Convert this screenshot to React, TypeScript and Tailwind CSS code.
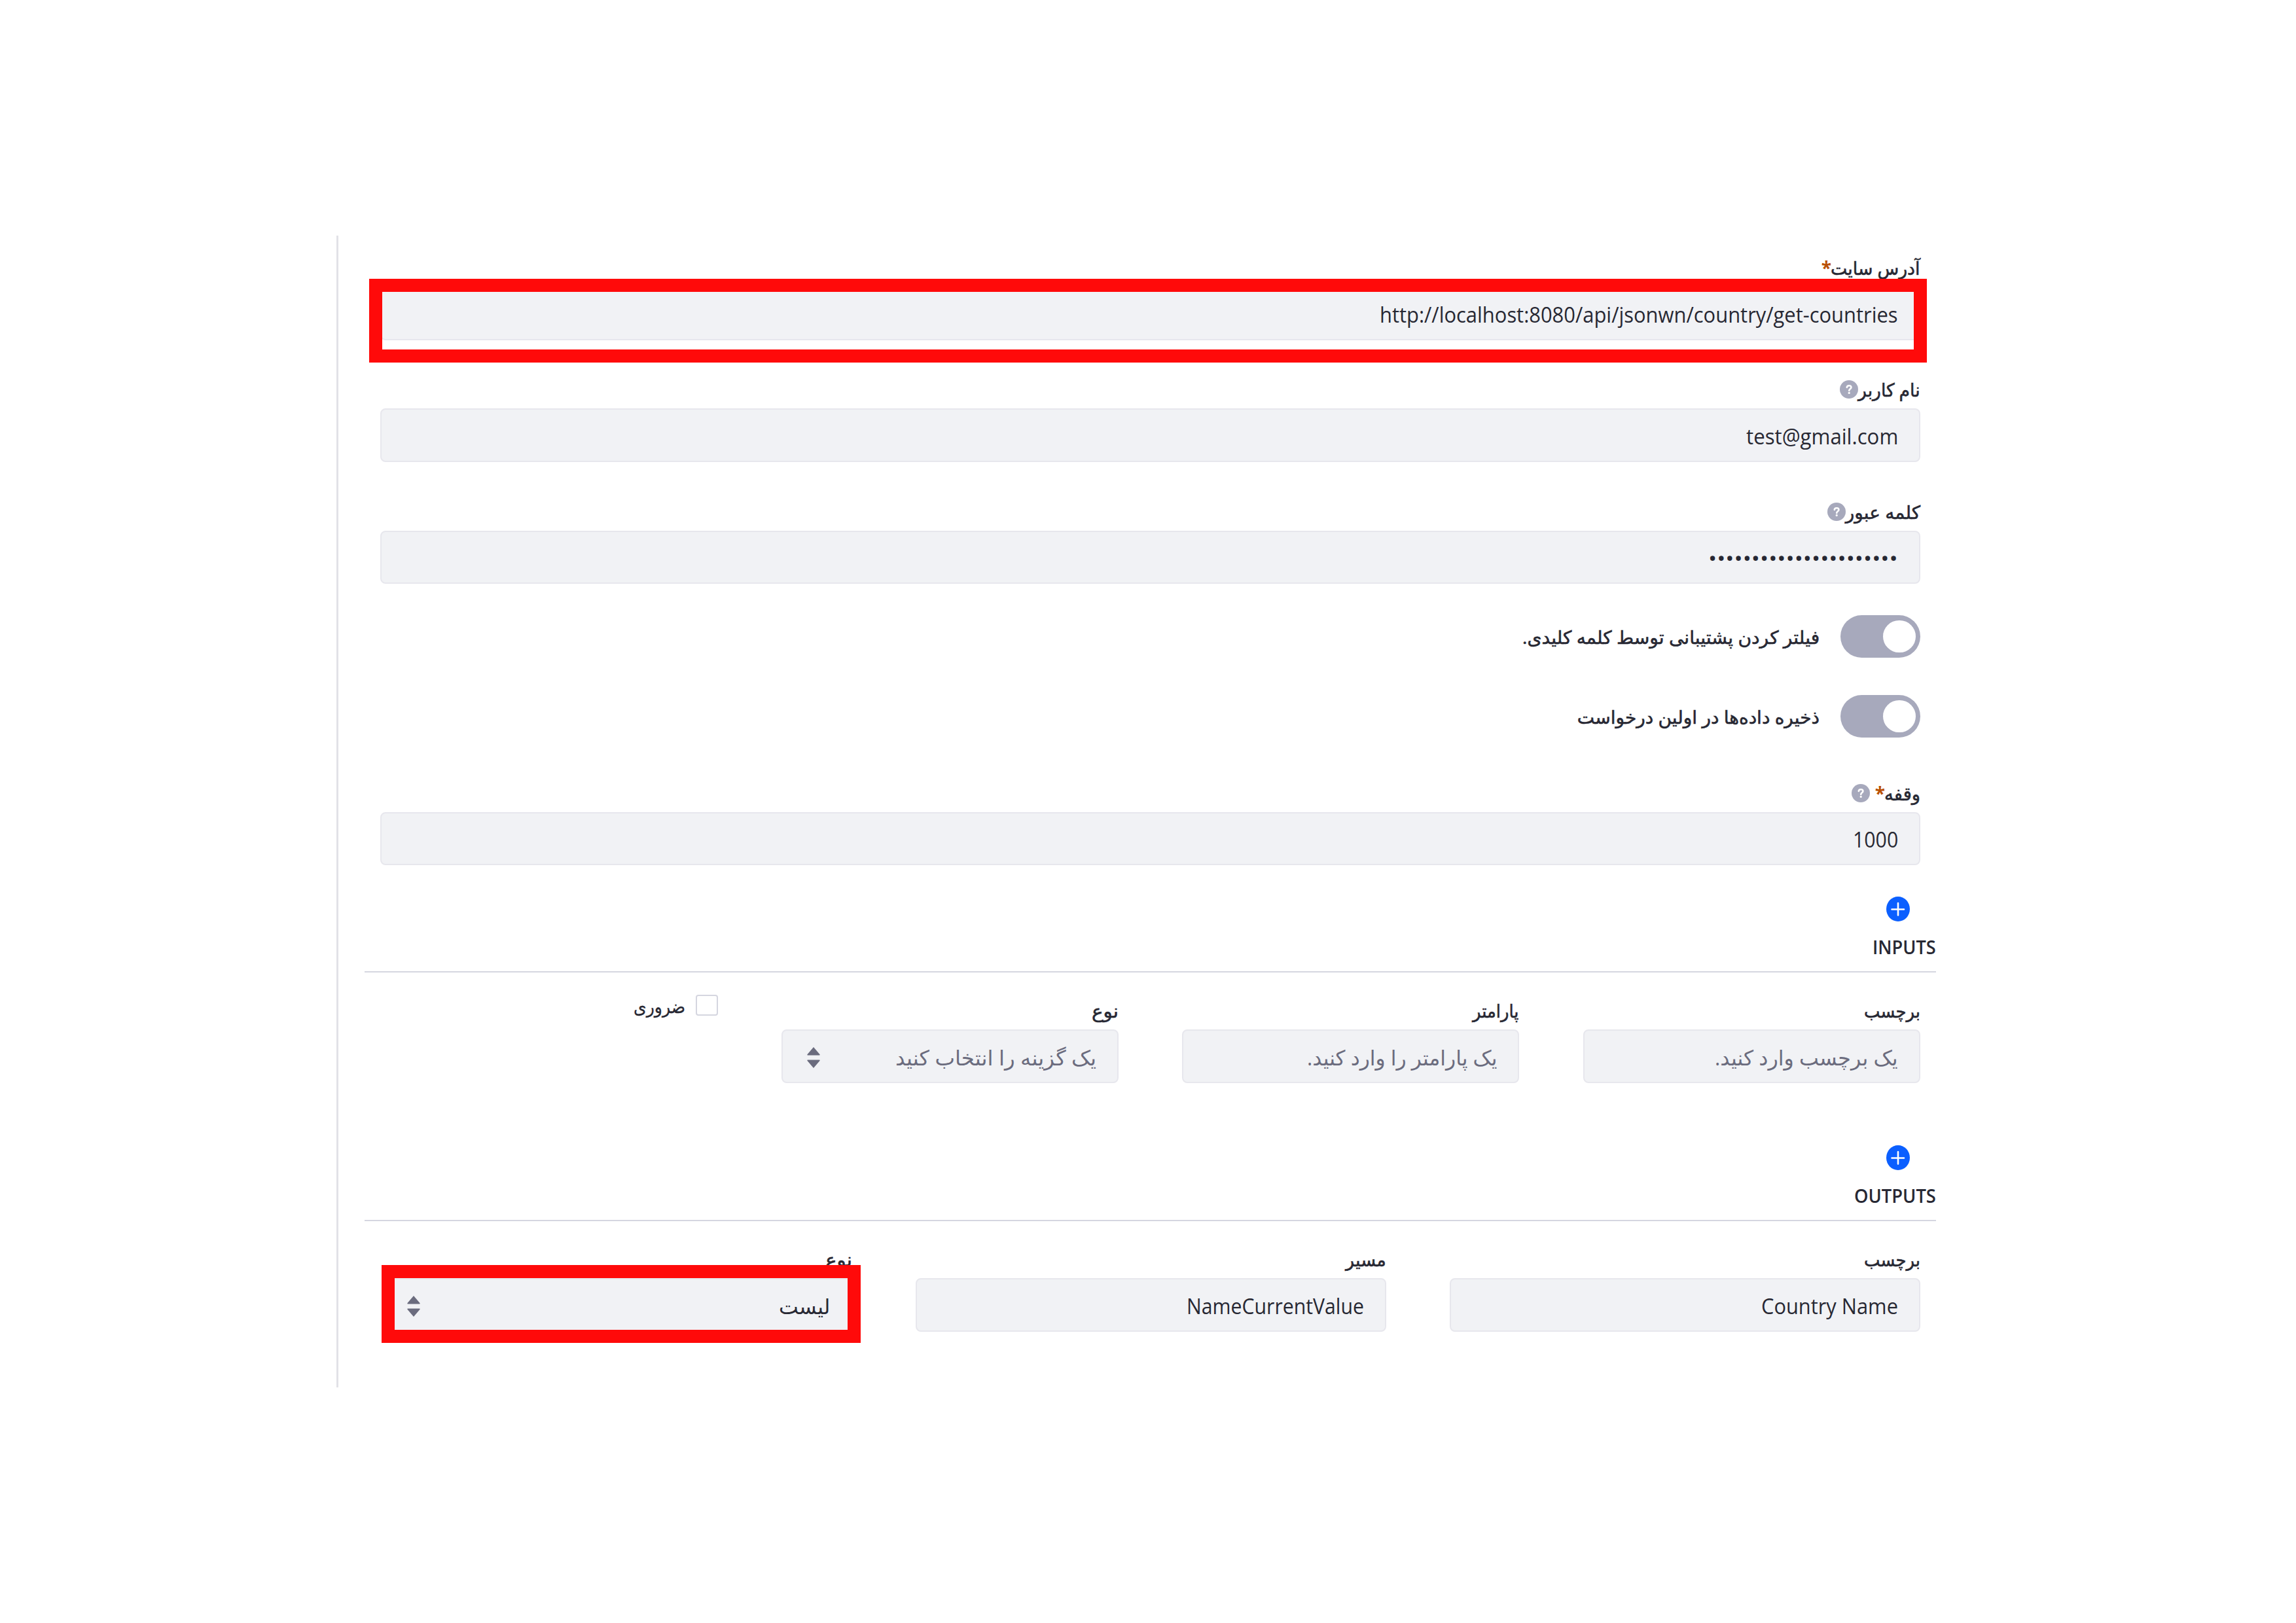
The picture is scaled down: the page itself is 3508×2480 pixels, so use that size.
import { useLayoutEffect, useRef, useState, type ReactNode } from "react";

interface FitProps {
  w: number;
  ltr?: boolean;
  className?: string;
  children: ReactNode;
}

// Keeps a run of text at a fixed width, whatever font is picked up
function Fit({ w, ltr, className = "", children }: FitProps) {
  const ref = useRef<HTMLSpanElement>(null);
  const [scale, setScale] = useState(1);

  useLayoutEffect(() => {
    if (ref.current) setScale(w / ref.current.offsetWidth);
  }, [w]);

  return (
    <span className={`flex shrink-0 ${className}`} style={{ width: w }}>
      <span
        ref={ref}
        dir={ltr ? "ltr" : "rtl"}
        className="block shrink-0 origin-right whitespace-nowrap"
        style={{ transform: `scaleX(${scale})` }}
      >
        {children}
      </span>
    </span>
  );
}

function HelpIcon({ className = "" }: { className?: string }) {
  return (
    <svg viewBox="0 0 28 28" className={`size-7 shrink-0 ${className}`}>
      <circle cx="14" cy="14" r="14" fill="#a7a9bc" />
      <path d="M10.800 10.900c.3-3.700 6.600-3.500 6.600 0 0 2.300-3 2.400-3.200 4.900" fill="none" stroke="#fff" strokeWidth="2.600" strokeLinecap="round" />
      <circle cx="14.200" cy="19.400" r="1.600" fill="#fff" />
    </svg>
  );
}

function PlusIcon() {
  return (
    <svg viewBox="0 0 36 38" className="mr-10 h-[38px] w-9">
      <ellipse cx="18" cy="19" rx="18" ry="19" fill="#0b5fff" />
      <path d="M18 10v18.500M8.500 19.500h18.500" stroke="#fff" strokeWidth="2.600" strokeLinecap="round" />
    </svg>
  );
}

function SortIcon({ className = "" }: { className?: string }) {
  return (
    <svg viewBox="0 0 20 32" className={`mr-auto h-8 w-5 shrink-0 ${className}`} fill="#6b6c7e">
      <path d="M10 0 19.600 11.200q.4 1.300-.8 1.300H1.200q-1.200 0-.8-1.300zM10 32 19.600 20.800q.4-1.300-.8-1.300H1.200q-1.200 0-.8 1.300z" />
    </svg>
  );
}

function Star() {
  return <span className="-mr-px font-bold text-[#b95000]">*</span>;
}

interface FieldProps {
  label: string;
  labelWidth: number;
  extra?: ReactNode;
  className?: string;
  boxClass?: string;
  children: ReactNode;
}

function Field({ label, labelWidth, extra, className = "", boxClass = "h-[82px]", children }: FieldProps) {
  return (
    <div className={className}>
      <div className="flex h-[43px] items-start text-[28px] leading-[28px]">
        <Fit w={labelWidth} className="[-webkit-text-stroke:0.6px_#272833]">{label}</Fit>
        {extra}
      </div>
      <div className={`flex items-center rounded-lg border-2 border-[#e7e7ed] bg-[#f1f2f5] px-8 pt-[3px] text-[32px] leading-[48px] ${boxClass}`}>
        {children}
      </div>
    </div>
  );
}

function ToggleRow({ label, w, className = "" }: { label: string; w: number; className?: string }) {
  return (
    <div className={`flex h-[65px] items-center text-[28px] ${className}`}>
      <div className="flex h-[65px] w-[122px] items-center rounded-full bg-[#a7a9bc] pr-[7px]">
        <div className="h-[49px] w-[50px] rounded-full bg-white" />
      </div>
      <Fit w={w} className="mr-[32px] [-webkit-text-stroke:0.6px_#272833]">{label}</Fit>
    </div>
  );
}

function SectionHead({ title, w, className = "" }: { title: string; w: number; className?: string }) {
  return (
    <div className={`h-[116px] border-b-2 border-[#d5d6e0] ${className}`}>
      <PlusIcon />
      <div className="mt-[18px] text-[28px] leading-[42px] font-semibold">
        <Fit w={w} ltr>{title}</Fit>
      </div>
    </div>
  );
}

export default function App() {
  return (
    <div dir="ltr" className="h-[2480px] w-[3508px] overflow-hidden bg-white pt-[360px] pl-[514px] font-['Open_Sans','Noto_Sans','DejaVu_Sans',sans-serif] text-[#272833]">
      <div dir="rtl" className="relative h-[1760px] w-[2444px] border-l-[3px] border-[#e2e2e7] pt-[35px] pl-10">
        <div className="pr-6 pl-6">
          <Field label="آدرس سایت" labelWidth={137} extra={<Star />}>
            <Fit w={792} ltr>http://localhost:8080/api/jsonwn/country/get-countries</Fit>
          </Field>
          <Field label="نام کاربر" labelWidth={95} extra={<HelpIcon />} className="mt-[61px]">
            <Fit w={232} ltr>test@gmail.com</Fit>
          </Field>
          <Field label="کلمه عبور" labelWidth={114} extra={<HelpIcon />} className="mt-[62px]" boxClass="h-[81px]">
            <Fit w={290} ltr>{"•".repeat(22)}</Fit>
          </Field>
          <ToggleRow label="فیلتر کردن پشتیبانی توسط کلمه کلیدی." w={454} className="mt-12" />
          <ToggleRow label="ذخیره داده‌ها در اولین درخواست" w={370} className="mt-[57px]" />
          <Field
            label="وقفه"
            labelWidth={55}
            extra={<><Star /><HelpIcon className="mr-2" /></>}
            className="mt-[71px]"
            boxClass="h-[81px]"
          >
            <Fit w={69} ltr>1000</Fit>
          </Field>
        </div>

        <SectionHead title="INPUTS" w={97} className="mt-12" />
        <div className="mt-11 flex pr-6">
          <Field label="برچسب" labelWidth={86} className="w-[515px]">
            <Fit w={280} className="text-[#6b6c7e]">یک برچسب وارد کنید.</Fit>
          </Field>
          <Field label="پارامتر" labelWidth={71} className="mr-[98px] w-[515px]">
            <Fit w={290} className="text-[#6b6c7e]">یک پارامتر را وارد کنید.</Fit>
          </Field>
          <Field label="نوع" labelWidth={41} className="mr-[97px] w-[515px]">
            <Fit w={307} className="text-[#6b6c7e]">یک گزینه را انتخاب کنید</Fit>
            <SortIcon className="ml-[5px]" />
          </Field>
          <div className="mr-[97px] -mt-[10px] flex h-8 items-center text-[28px]">
            <div className="h-8 w-[34px] rounded border-2 border-[#d5d6e0] bg-white" />
            <Fit w={79} className="mt-0.5 mr-4 [-webkit-text-stroke:0.3px_#272833]">ضروری</Fit>
          </div>
        </div>

        <SectionHead title="OUTPUTS" w={125} className="mt-[95px]" />
        <div className="mt-11 flex gap-[97px] pr-6">
          <Field label="برچسب" labelWidth={86} className="w-[719px]">
            <Fit w={209} ltr>Country Name</Fit>
          </Field>
          <Field label="مسیر" labelWidth={62} className="w-[719px]">
            <Fit w={271} ltr>NameCurrentValue</Fit>
          </Field>
          <Field label="نوع" labelWidth={41} className="w-[719px]">
            <Fit w={78}>لیست</Fit>
            <SortIcon className="ml-[5px]" />
          </Field>
        </div>

        {/* highlight frames over the fields */}
        <div className="absolute top-[66px] left-[47px] h-[128px] w-[2380px] border-[20px] border-[#ff0a0a]" />
        <div className="absolute top-[1573px] left-[66px] h-[119px] w-[732px] border-[20px] border-[#ff0a0a]" />
      </div>
    </div>
  );
}
